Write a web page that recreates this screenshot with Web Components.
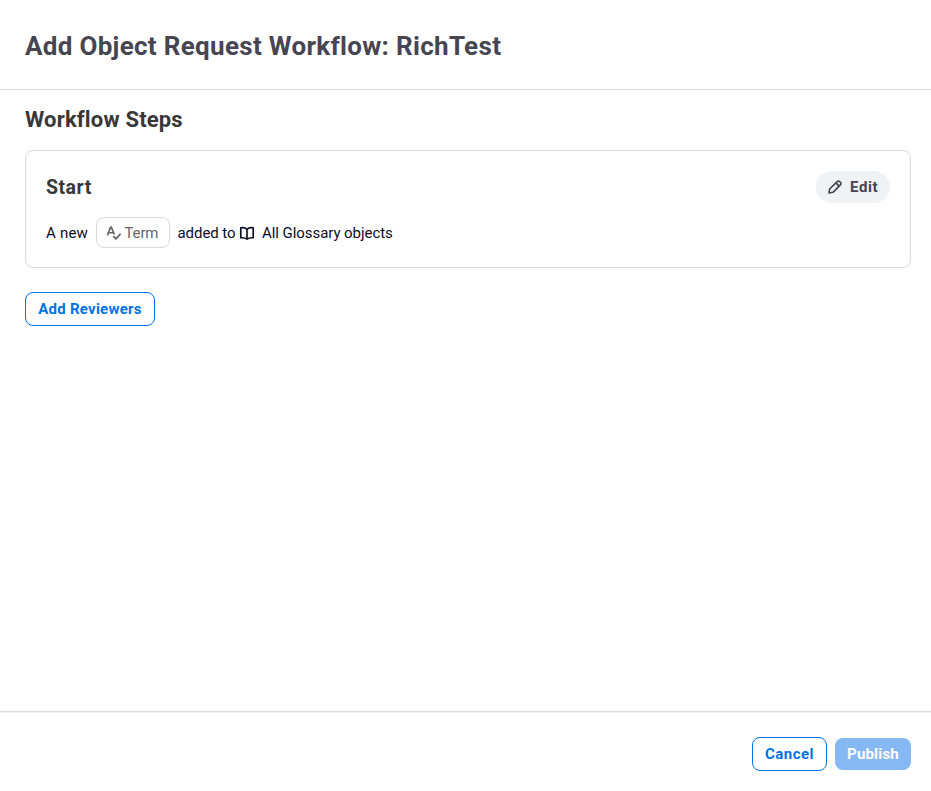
<!DOCTYPE html>
<html lang="en"><head><meta charset="utf-8"><title>Add Object Request Workflow</title>
<style>
body{margin:0;background:#fff;font-family:Roboto,"Liberation Sans",sans-serif;font-size:15px;line-height:20px;color:#0b0d26}
</style></head><body>
<workflow-dialog>
  <span slot="title">Add Object Request Workflow: RichTest</span>
  <workflow-steps>
    <span slot="heading">Workflow Steps</span>
    <step-card>
      <span slot="name">Start</span>
      <pill-button slot="action"><ui-icon name="pencil"></ui-icon>Edit</pill-button>
      <span style="letter-spacing:.2px;width:50px">A new</span>
      <object-chip><ui-icon name="term"></ui-icon>Term</object-chip>
      <span style="margin-left:7.5px;width:61.5px;letter-spacing:-.06px">added to</span>
      <ui-icon name="book"></ui-icon>
      <span style="margin-left:7px;letter-spacing:-.06px">All Glossary objects</span>
    </step-card>
    <action-button style="width:130px;letter-spacing:.26px">Add Reviewers</action-button>
  </workflow-steps>
  <action-button slot="footer" style="width:75px;letter-spacing:.48px">Cancel</action-button>
  <action-button slot="footer" primary style="width:76px;letter-spacing:.2px">Publish</action-button>
</workflow-dialog>
<script>
const define = (name, html) => customElements.define(name, class extends HTMLElement {
  constructor() {
    super();
    this.attachShadow({mode: 'open'}).innerHTML = html;
  }
});
define('workflow-dialog', `<style>
:host{display:flex;flex-direction:column;height:791px;box-sizing:border-box}
header{height:89px;padding:0 25px;display:flex;align-items:center;border-bottom:1px solid #d3dade;flex:none}
h1{margin:3px 0 0;font-size:26px;line-height:32px;font-weight:700;letter-spacing:.306px;color:#464551}
main{flex:1;padding:16px 20px 0 25px}
footer{height:74px;flex:none;border-top:1px solid #d3dade;box-shadow:inset 0 1px #eff2f3;display:flex;justify-content:flex-end;align-items:center;gap:8px;padding:5px 20px 0 0}
</style><header><h1><slot name="title"></slot></h1></header><main><slot></slot></main><footer><slot name="footer"></slot></footer>`);
define('workflow-steps', `<style>
:host{display:flex;flex-direction:column;align-items:flex-start}
h2{margin:0 0 16px;font-size:22px;line-height:28px;font-weight:700;letter-spacing:.17px;color:#383838}
::slotted(step-card){align-self:stretch;margin-bottom:24px}
</style><h2><slot name="heading"></slot></h2><slot></slot>`);
define('step-card', `<style>
:host{display:block;box-sizing:border-box;height:118px;border:1px solid #d9d9d9;border-radius:8px;padding:20px}
.top{display:flex;justify-content:space-between;align-items:center;height:32px}
h3{margin:1px 0 0;font-size:19.5px;line-height:24px;font-weight:700;letter-spacing:.5px;color:#383838}
.body{display:flex;align-items:center;margin-top:14px;height:31px;white-space:nowrap}
</style><div class="top"><h3><slot name="name"></slot></h3><slot name="action"></slot></div><div class="body"><slot></slot></div>`);
define('pill-button', `<style>
:host{display:block}
button{box-sizing:border-box;width:74px;height:32px;border:0;border-radius:16px;background:#eff3f6;color:#464551;font:700 15px/20px Roboto,sans-serif;letter-spacing:.6px;padding:0 0 0 11px;display:flex;align-items:center;white-space:nowrap}
::slotted(ui-icon){margin-right:7px}
</style><button><slot></slot></button>`);
define('object-chip', `<style>
:host{display:flex;align-items:center;box-sizing:border-box;width:74px;height:31px;border:1px solid #d9d9d9;border-radius:8px;color:#666;padding-left:9px;letter-spacing:-.15px}
::slotted(ui-icon){margin-right:2.5px}
</style><slot></slot>`);
define('action-button', `<style>
:host{display:block}
button{box-sizing:border-box;width:100%;height:34px;border:1px solid #0073e6;border-radius:8px;background:#fff;color:#0073e6;font:700 15px/20px Roboto,sans-serif;letter-spacing:inherit;padding:0;white-space:nowrap}
:host([primary]) button{height:32px;border:0;background:#86b9f4;color:#fff}
</style><button><slot></slot></button>`);
const ICONS = {
  pencil: '<path d="M2 14l.6-4L10.2 2.6a1.75 1.75 0 0 1 2.5 0l.7.7a1.75 1.75 0 0 1 0 2.5L6 13.3 2 14ZM8.9 3.9l3.2 3.2"/>',
  term: '<path d="M1.4 10.4 4.6 2.1h.7l3 7.4M2.6 7.7h4.8M7.2 11.2l2.7 2.7 4.7-5.3"/>',
  book: '<path d="M8 4.3C6.7 3 4.2 2.3 1.8 2.8v10c2.4-.3 4.6.1 6.2 1.4 1.6-1.3 3.8-1.7 6.2-1.4v-10C11.8 2.3 9.3 3 8 4.3Zm0 0v9.6"/>'
};
customElements.define('ui-icon', class extends HTMLElement {
  connectedCallback() {
    this.attachShadow({mode: 'open'}).innerHTML = `<style>:host{display:block;flex:none;width:16px;height:16px}svg{display:block}</style><svg width="16" height="16" viewBox="0 0 16 16" fill="none" stroke="currentColor" stroke-width="1.65" stroke-linejoin="round">${ICONS[this.getAttribute('name')]}</svg>`;
  }
});
</script></body></html>
